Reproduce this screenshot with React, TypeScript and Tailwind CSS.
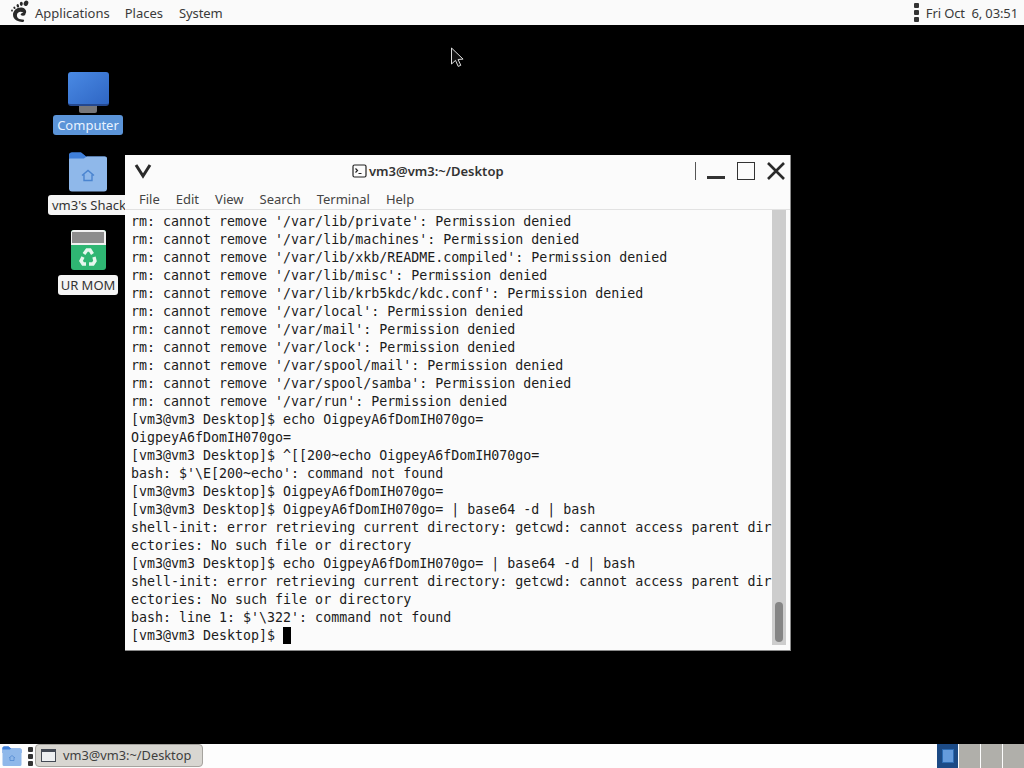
import React from "react";

const lines = [
  "rm: cannot remove '/var/lib/private': Permission denied",
  "rm: cannot remove '/var/lib/machines': Permission denied",
  "rm: cannot remove '/var/lib/xkb/README.compiled': Permission denied",
  "rm: cannot remove '/var/lib/misc': Permission denied",
  "rm: cannot remove '/var/lib/krb5kdc/kdc.conf': Permission denied",
  "rm: cannot remove '/var/local': Permission denied",
  "rm: cannot remove '/var/mail': Permission denied",
  "rm: cannot remove '/var/lock': Permission denied",
  "rm: cannot remove '/var/spool/mail': Permission denied",
  "rm: cannot remove '/var/spool/samba': Permission denied",
  "rm: cannot remove '/var/run': Permission denied",
  "[vm3@vm3 Desktop]$ echo OigpeyA6fDomIH070go=",
  "OigpeyA6fDomIH070go=",
  "[vm3@vm3 Desktop]$ ^[[200~echo OigpeyA6fDomIH070go=",
  "bash: $'\\E[200~echo': command not found",
  "[vm3@vm3 Desktop]$ OigpeyA6fDomIH070go=",
  "[vm3@vm3 Desktop]$ OigpeyA6fDomIH070go= | base64 -d | bash",
  "shell-init: error retrieving current directory: getcwd: cannot access parent dir",
  "ectories: No such file or directory",
  "[vm3@vm3 Desktop]$ echo OigpeyA6fDomIH070go= | base64 -d | bash",
  "shell-init: error retrieving current directory: getcwd: cannot access parent dir",
  "ectories: No such file or directory",
  "bash: line 1: $'\\322': command not found",
];

function Foot() {
  return (
    <svg width="22" height="24" viewBox="0 0 22 24" fill="#2a2a2a">
      <path d="M11.5 7.5c-4.5-.3-8.5 3-8.5 7.3 0 2.8 1.6 4.6 3.6 5.6 1.7.9 3.6 1.4 5.5 1.7 1.3.1 2.2-.7 2-1.6-.2-1-1.5-1-3.2-1.2-2.2-.3-4-1.4-4-3.9 0-2.2 1.8-3.6 3.8-3.6 1.6 0 2.6.8 2.9 1.7.3.8 1.3.9 1.9.2.7-.9.9-2.2.3-3.4-.7-1.7-2.4-2.7-4.3-2.8z" />
      <ellipse cx="13" cy="14.2" rx="2.1" ry="1.5" fill="#2a2a2a" />
      <ellipse cx="16" cy="3.2" rx="2.2" ry="2.8" transform="rotate(25 16 3.2)" />
      <ellipse cx="11.3" cy="3.8" rx="1.5" ry="2.1" />
      <ellipse cx="7.8" cy="5.8" rx="1.2" ry="1.7" transform="rotate(-20 7.8 5.8)" />
      <ellipse cx="4.4" cy="7.8" rx="1" ry="1.3" transform="rotate(-30 4.4 7.8)" />
      <ellipse cx="2" cy="10.6" rx=".9" ry="1.1" />
    </svg>
  );
}

function Dots() {
  return (
    <div className="flex flex-col gap-[2px]">
      <div className="w-[5px] h-[5px] rounded-[1px] bg-[#333333]" />
      <div className="w-[5px] h-[5px] rounded-[1px] bg-[#333333]" />
      <div className="w-[5px] h-[5px] rounded-[1px] bg-[#333333]" />
    </div>
  );
}

function Folder({ w, h }: { w: number; h: number }) {
  return (
    <svg width={w} height={h} viewBox="0 0 40 40">
      <path d="M1 4a3 3 0 0 1 3-3h9l5 4h18a3 3 0 0 1 3 3v6H1z" fill="#3f7fd9" />
      <path d="M1 8a2 2 0 0 1 2-2h14l2-1h18a2 2 0 0 1 2 2v30a3 3 0 0 1-3 3H4a3 3 0 0 1-3-3z" fill="#8fb8ea" />
      <path d="M1 4a3 3 0 0 1 3-3h9l5 4-2 2H1z" fill="#3f7fd9" />
      <path d="M14 24l6-5 6 5M16 23v6h8v-6" fill="none" stroke="#4a84d0" strokeWidth="1.4" />
    </svg>
  );
}

function Recycle() {
  return (
    <svg width="20" height="20" viewBox="0 0 20 20" fill="none" stroke="#e6f7ee" strokeWidth="3.4">
      <path d="M6 7l3-4h3l2.5 4" />
      <path d="M16 10l1 4-2 3h-4" />
      <path d="M8 17H5l-2-3 2-4" />
    </svg>
  );
}

export default function App() {
  return (
    <div className="w-[1024px] h-[768px] flex flex-col overflow-hidden bg-black font-['Noto_Sans',sans-serif] relative">
      {/* top panel */}
      <div className="h-[25px] shrink-0 bg-[#fafafa] flex items-center text-[#3a3a3a] text-[13px] pt-[2px]">
        <div className="ml-[10px] mr-[5px] w-[20px] -mt-[3px]"><Foot /></div>
        <span>Applications</span>
        <span className="ml-[15px]">Places</span>
        <span className="ml-[16px] tracking-[-0.1px]">System</span>
        <div className="ml-auto mr-[6px] flex items-center gap-[7px]">
          <div className="-mt-[2px]"><Dots /></div>
          <span className="tracking-[-0.12px]">Fri Oct&nbsp; 6, 03:51</span>
        </div>
      </div>

      {/* desktop */}
      <div className="flex-1 relative">
        <div className="absolute left-[48px] top-[47px] w-[80px] flex flex-col items-center">
          <div className="w-[41px] h-[34px] rounded-[3px] bg-gradient-to-br from-[#4a8ae4] to-[#2f66c4] border-b-2 border-[#24488f]" />
          <div className="w-[18px] h-[7px] bg-[#77777a] rounded-b-[2px]" />
          <div className="mt-[2px] h-[20px] px-[4px] rounded-[3px] bg-[#5b94d8] text-[#e8f2ff] text-[13px] leading-[20px]">Computer</div>
        </div>
        <div className="absolute left-[48px] top-[126px] w-[80px] flex flex-col items-center overflow-visible">
          <Folder w={40} h={41} />
          <div className="mt-[3px] self-start h-[20px] pl-[4px] w-[77px] ml-0 overflow-hidden rounded-l-[3px] bg-[#f5f5f5] text-[#333333] text-[13px] leading-[20px] whitespace-nowrap">vm3's Shack</div>
        </div>
        <div className="absolute left-[58px] top-[205px] w-[60px] flex flex-col items-center">
          <div className="w-[35px] h-[40px] rounded-[3px] bg-[#2fb673] overflow-hidden flex flex-col items-center">
            <div className="w-full h-[15px] shrink-0 bg-[#f2f2f2] flex items-center justify-center">
              <div className="w-[32px] h-[11px] bg-[#8d8d8d]" />
            </div>
            <div className="mt-[2px]"><Recycle /></div>
          </div>
          <div className="mt-[5px] h-[20px] w-[60px] text-center rounded-[3px] bg-[#f5f5f5] text-[#333333] text-[13px] leading-[20px] whitespace-nowrap">UR MOM</div>
        </div>

        {/* mouse pointer */}
        <svg className="absolute left-[450px] top-[22px]" width="14" height="21" viewBox="0 0 14 21">
          <path d="M1.5 1v16l4-3.6 2.7 6 2.6-1.1-2.7-5.8 5-.4z" fill="#111" stroke="#ddd" strokeWidth="1" />
        </svg>

        {/* window */}
        <div className="absolute left-[125px] top-[130px] w-[666px] h-[496px] bg-[#fbfbfb] border-r border-b border-[#8a8a8a] flex flex-col">
          <div className="h-[32px] shrink-0 flex items-center relative">
            <svg className="ml-[9px]" width="18" height="16" viewBox="0 0 18 16" fill="none" stroke="#2a2a2a" strokeWidth="3">
              <path d="M2 2l7 11 7-11" />
            </svg>
            <div className="absolute left-[227px] top-[8px] flex items-center gap-[2px] text-[13px] font-semibold text-[#333333] leading-[16px]">
              <svg width="15" height="14" viewBox="0 0 15 14" fill="none" stroke="#222" strokeWidth="1.2">
                <rect x="1" y="1" width="13" height="12" rx="1.5" />
                <path d="M3.5 4.5l2 2-2 2M6.5 9.5h3" />
              </svg>
              <span>vm3@vm3:~/Desktop</span>
            </div>
            <div className="ml-auto flex items-center">
              <div className="w-px h-[18px] bg-[#555555] mr-[11px]" />
              <div className="w-[18px] h-[3px] bg-[#333333] mt-[12px] mr-[12px]" />
              <div className="w-[18px] h-[18px] border-[1.5px] border-[#333333] mr-[11px]" />
              <svg className="mr-[4px]" width="20" height="20" viewBox="0 0 20 20" fill="none" stroke="#2a2a2a" strokeWidth="2.6">
                <path d="M2 2l16 16M18 2L2 18" />
              </svg>
            </div>
          </div>
          <div className="h-[23px] shrink-0 flex items-center pl-[14px] pt-[3px] gap-[16px] text-[13px] text-[#444444] border-b border-[#e2e2e2]">
            <span>File</span>
            <span>Edit</span>
            <span>View</span>
            <span>Search</span>
            <span>Terminal</span>
            <span>Help</span>
          </div>
          <div className="flex-1 flex min-h-0">
            <div className="w-[647px] pl-[6px] pt-[3px] font-['DejaVu_Sans_Mono',monospace] text-[13.3px] leading-[18px] text-[#1c1c1c] whitespace-pre overflow-hidden">
              {lines.map((l, i) => (
                <div key={i} className="h-[18px]">{l}</div>
              ))}
              <div className="h-[18px] flex">
                <span>[vm3@vm3 Desktop]$ </span>
                <span className="w-[8px] h-[17px] bg-black" />
              </div>
            </div>
            <div className="w-[14px] h-[435px] bg-[#cdcdcd] flex flex-col justify-end items-center pb-[3px]">
              <div className="w-[8px] h-[40px] rounded-[4px] bg-[#858585]" />
            </div>
          </div>
        </div>
      </div>

      {/* bottom panel */}
      <div className="h-[24px] shrink-0 bg-[#fdfdfd] flex items-center">
        <div className="ml-[2px] w-[20px]"><Folder w={20} h={20} /></div>
        <div className="ml-[6px]"><Dots /></div>
        <div className="ml-[2px] w-[168px] h-[23px] mt-[-1px] rounded-[4px] bg-[#d8d6d1] border border-[#a5a39e] flex items-center pl-[5px] gap-[7px] text-[12.8px] text-[#3e3e3e]">
          <div className="w-[15px] h-[13px] border border-[#444a55] border-t-[3px] bg-[#eef0f2]" />
          <span>vm3@vm3:~/Desktop</span>
        </div>
        <div className="ml-auto flex h-full gap-px">
          <div className="w-[21px] h-full bg-[#1c4a85] flex items-center justify-center">
            <div className="w-[12px] h-[14px] bg-[#659bdc] border border-[#2d6cb4]" />
          </div>
          <div className="w-[21px] h-full bg-[#b0afaa]" />
          <div className="w-[21px] h-full bg-[#b0afaa]" />
          <div className="w-[21px] h-full bg-[#b0afaa]" />
        </div>
      </div>
    </div>
  );
}
